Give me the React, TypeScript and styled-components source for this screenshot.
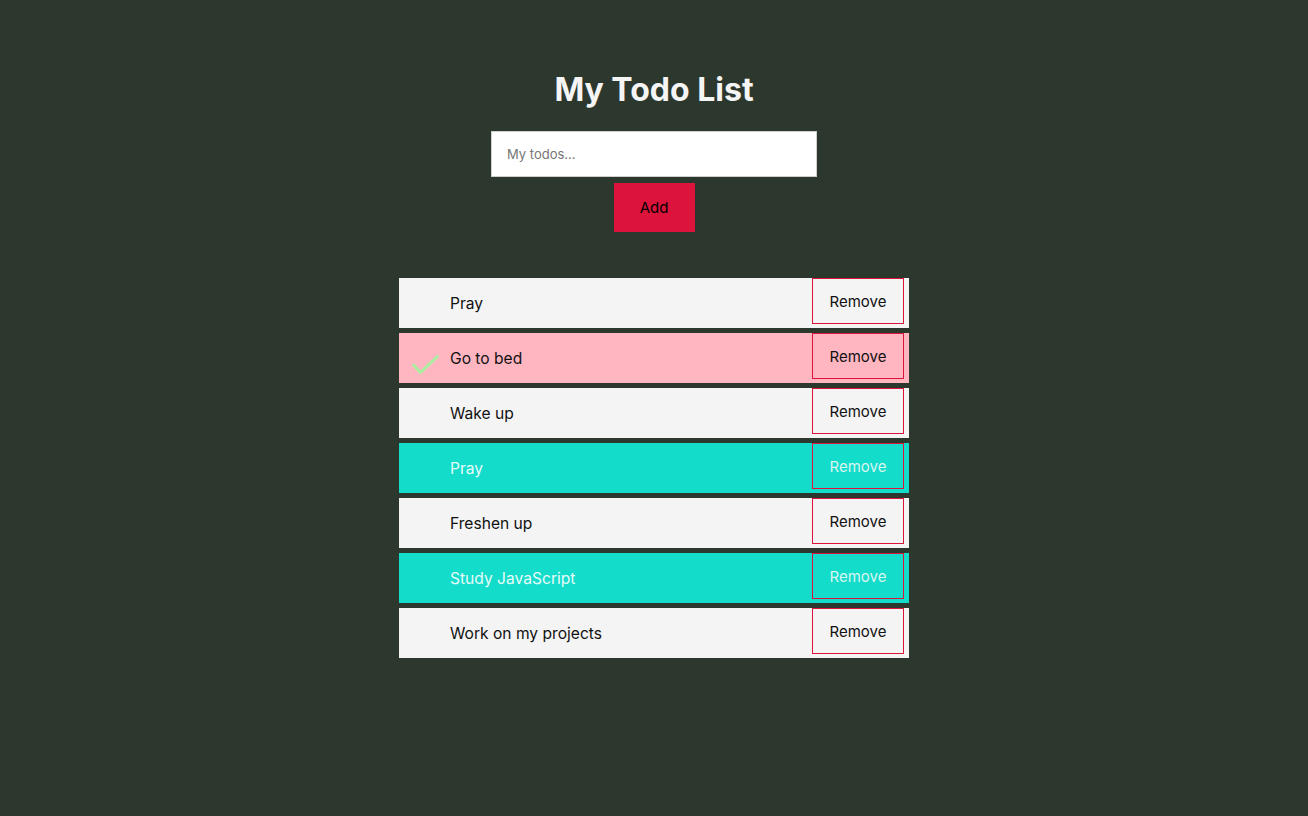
import React from "react";
import styled, { createGlobalStyle } from "styled-components";

const Global = createGlobalStyle`
  html, body { margin: 0; padding: 0; background: #2c382d; }
  body { font-family: Inter, "Noto Sans", "Liberation Sans", sans-serif; min-height: 816px; }
`;

const Page = styled.div`
  display: flex;
  flex-direction: column;
  align-items: center;
  padding-top: 71px;
`;

const Title = styled.h1`
  margin: 0;
  font-size: 32px;
  line-height: 38px;
  font-weight: 700;
  color: #f5f5f5;
`;

const Input = styled.input`
  margin-top: 22px;
  width: 326px;
  height: 46px;
  box-sizing: border-box;
  border: 1px solid #cfcfcf;
  background: #fff;
  padding: 0 15px;
  font-family: Inter, "Noto Sans", sans-serif;
  font-size: 13px;
  outline: none;
  &::placeholder { color: #767676; }
`;

const AddButton = styled.button`
  margin-top: 6px;
  width: 81px;
  height: 49px;
  border: none;
  background: #dc143c;
  color: #000;
  font-family: Inter, "Noto Sans", sans-serif;
  font-size: 15px;
  cursor: pointer;
`;

const List = styled.ul`
  list-style: none;
  margin: 46px 0 0;
  padding: 0;
  width: 510px;
  display: flex;
  flex-direction: column;
  gap: 5px;
`;

type Variant = "plain" | "done" | "active";

const bg: Record<Variant, string> = {
  plain: "#f4f4f4",
  done: "#ffb6c1",
  active: "#13dccb",
};

const Row = styled.li<{ $v: Variant }>`
  display: flex;
  align-items: center;
  height: 50px;
  background: ${(p) => bg[p.$v]};
  color: ${(p) => (p.$v === "active" ? "#e6fbf8" : "#111")};
`;

const CheckCell = styled.div`
  width: 51px;
  align-self: stretch;
  box-sizing: border-box;
  padding: 21px 0 0 13px;
`;

const Label = styled.span`
  flex: 1;
  font-size: 15.6px;
`;

const RemoveButton = styled.button<{ $v: Variant }>`
  align-self: flex-start;
  margin-right: 5px;
  width: 92px;
  height: 46px;
  box-sizing: border-box;
  border: 1px solid #dc143c;
  background: transparent;
  color: ${(p) => (p.$v === "active" ? "#d8f5f0" : "#111")};
  font-family: Inter, "Noto Sans", sans-serif;
  font-size: 15px;
  padding: 0;
  cursor: pointer;
`;

const Check = () => (
  <svg width="27" height="20" viewBox="0 0 27 20">
    <polyline
      points="1.5,11 8.5,18.5 25.5,2.5"
      fill="none"
      stroke="#a8f0a0"
      strokeWidth="3"
      strokeLinecap="round"
      strokeLinejoin="round"
    />
  </svg>
);

const todos: { text: string; v: Variant }[] = [
  { text: "Pray", v: "plain" },
  { text: "Go to bed", v: "done" },
  { text: "Wake up", v: "plain" },
  { text: "Pray", v: "active" },
  { text: "Freshen up", v: "plain" },
  { text: "Study JavaScript", v: "active" },
  { text: "Work on my projects", v: "plain" },
];

export default function App() {
  return (
    <>
      <Global />
      <Page>
        <Title>My Todo List</Title>
        <Input placeholder="My todos..." />
        <AddButton>Add</AddButton>
        <List>
          {todos.map((t, i) => (
            <Row key={i} $v={t.v}>
              <CheckCell>{t.v === "done" && <Check />}</CheckCell>
              <Label>{t.text}</Label>
              <RemoveButton $v={t.v}>Remove</RemoveButton>
            </Row>
          ))}
        </List>
      </Page>
    </>
  );
}
